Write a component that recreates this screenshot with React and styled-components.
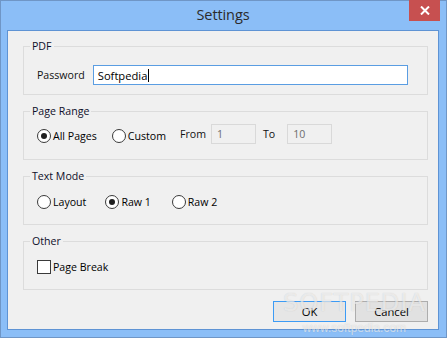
import React from "react";
import styled, { createGlobalStyle } from "styled-components";

const Global = createGlobalStyle`
  html, body { margin: 0; padding: 0; background: #ffffff; }
  body { font-family: "Open Sans", "Noto Sans", sans-serif; }
  * { box-sizing: border-box; }
`;

const Window = styled.div`
  position: relative;
  width: 447px;
  height: 338px;
  border: 1px solid #6f96c6;
  background: #8bbef7;
  display: flex;
  flex-direction: column;
  padding: 0 7px 7px 6px;
`;

const TitleBar = styled.div`
  flex: none;
  height: 29px;
  display: grid;
  grid-template-columns: 1fr auto 1fr;
  align-items: start;
`;

const Title = styled.div`
  grid-column: 2;
  padding-top: 5px;
  font-size: 14.5px;
  color: #2b2b2b;
  line-height: 18px;
  letter-spacing: -0.1px;
`;

const CloseButton = styled.div`
  grid-column: 3;
  justify-self: end;
  margin-right: -1px;
  margin-top: -1px;
  width: 31px;
  height: 21px;
  background: #c75050;
  display: flex;
  align-items: center;
  justify-content: center;
`;

const Client = styled.div`
  flex: 1;
  border: 1px solid #5e93d4;
  background: #f0f0f0;
  padding: 15px 10px 0 15px;
  display: flex;
  flex-direction: column;
  gap: 16px;
  font-size: 10.6px;
  color: #000;
`;

const Group = styled.div`
  position: relative;
  flex: none;
  height: 49px;
  border: 1px solid #dcdcdc;
  padding: ${(p) => p.$top}px 19px 0 13px;
  display: flex;
`;

const Row = styled.div`
  height: 20px;
  display: flex;
  align-items: center;
  flex: 1;
`;

const Legend = styled.span`
  position: absolute;
  top: -9px;
  left: 6px;
  padding: 0 2px;
  background: #f0f0f0;
  line-height: 16px;
  color: #0f0f2a;
`;

const Label = styled.span`
  line-height: 16px;
  margin-right: ${(p) => p.$gap || 0}px;
  color: #111;
`;

const TextBox = styled.div`
  flex: 1;
  height: 20px;
  border: 1px solid #5a9de2;
  background: #fff;
  display: flex;
  align-items: center;
  padding-left: 4px;
  font-size: 11.2px;
`;

const Caret = styled.span`
  display: inline-block;
  width: 1px;
  height: 13px;
  background: #000;
  margin-left: 1px;
`;

const SmallBox = styled.div`
  width: 45px;
  height: 20px;
  border: 1px solid #d9d9d9;
  background: #f0f0f0;
  color: #6d6d6d;
  padding-left: 5px;
  display: flex;
  align-items: center;
  margin-right: ${(p) => p.$gap || 0}px;
`;

const Choice = styled.label`
  display: flex;
  align-items: center;
  margin-right: ${(p) => p.$gap || 0}px;
  margin-top: ${(p) => p.$nudge || 0}px;
  line-height: 16px;
`;

const Radio = styled.span`
  width: 14px;
  height: 14px;
  border-radius: 50%;
  border: 1px solid #3a3a3a;
  background: #fff;
  margin-right: 2px;
  display: flex;
  align-items: center;
  justify-content: center;
  &::after {
    content: "";
    width: 6px;
    height: 6px;
    border-radius: 50%;
    background: ${(p) => (p.$checked ? "#1e1e1e" : "transparent")};
  }
`;

const Check = styled.span`
  width: 14px;
  height: 14px;
  border: 1px solid #3a3a3a;
  background: #fff;
  margin-right: 2px;
`;

const Footer = styled.div`
  flex: none;
  display: flex;
  justify-content: flex-end;
  gap: 9px;
  margin-top: -5px;
`;

const Button = styled.div`
  width: 73px;
  height: 21px;
  display: flex;
  align-items: center;
  justify-content: center;
  border: 1px solid ${(p) => (p.$default ? "#3c9bf5" : "#adadad")};
  background: ${(p) => (p.$default ? "#e6e6e6" : "#e1e1e1")};
  font-size: 11.2px;
`;

const Watermark = styled.div`
  position: absolute;
  left: 282px;
  top: 289px;
  pointer-events: none;
  display: flex;
  flex-direction: column;
  align-items: center;
  font-family: "DejaVu Sans", sans-serif;
  color: rgba(255, 255, 255, 0.6);
  text-shadow: 0 0 1px rgba(110, 110, 110, 0.3);
`;

const WatermarkBig = styled.div`
  font-size: 24px;
  letter-spacing: 1px;
  line-height: 26px;
`;

const WatermarkSmall = styled.div`
  font-family: "Liberation Sans", sans-serif;
  font-size: 12px;
  line-height: 14px;
  margin-top: 5px;
`;

export default function App() {
  return (
    <>
      <Global />
      <Window>
        <TitleBar>
          <Title>Settings</Title>
          <CloseButton>
            <svg width="10" height="9" viewBox="0 0 10 9">
              <path d="M1 0.5 L9 8.5 M9 0.5 L1 8.5" stroke="#fff" strokeWidth="2" />
            </svg>
          </CloseButton>
        </TitleBar>
        <Client>
          <Group $top={18}>
            <Legend>PDF</Legend>
            <Row>
              <Label $gap={8}>Password</Label>
              <TextBox>
                Softpedia
                <Caret />
              </TextBox>
            </Row>
          </Group>
          <Group $top={12}>
            <Legend>Page Range</Legend>
            <Row>
              <Choice $gap={15} $nudge={3}>
                <Radio $checked />
                All Pages
              </Choice>
              <Choice $gap={14} $nudge={3}>
                <Radio />
                Custom
              </Choice>
              <Label $gap={5}>From</Label>
              <SmallBox $gap={7}>1</SmallBox>
              <Label $gap={12}>To</Label>
              <SmallBox>10</SmallBox>
            </Row>
          </Group>
          <Group $top={15}>
            <Legend>Text Mode</Legend>
            <Row>
              <Choice $gap={19}>
                <Radio />
                Layout
              </Choice>
              <Choice $gap={21}>
                <Radio $checked />
                Raw 1
              </Choice>
              <Choice>
                <Radio />
                Raw 2
              </Choice>
            </Row>
          </Group>
          <Group $top={15}>
            <Legend>Other</Legend>
            <Row>
              <Choice>
                <Check />
                Page Break
              </Choice>
            </Row>
          </Group>
          <Footer>
            <Button $default>OK</Button>
            <Button>Cancel</Button>
          </Footer>
        </Client>
        <Watermark>
          <WatermarkBig>SOFTPEDIA</WatermarkBig>
          <WatermarkSmall>www.softpedia.com</WatermarkSmall>
        </Watermark>
      </Window>
    </>
  );
}
